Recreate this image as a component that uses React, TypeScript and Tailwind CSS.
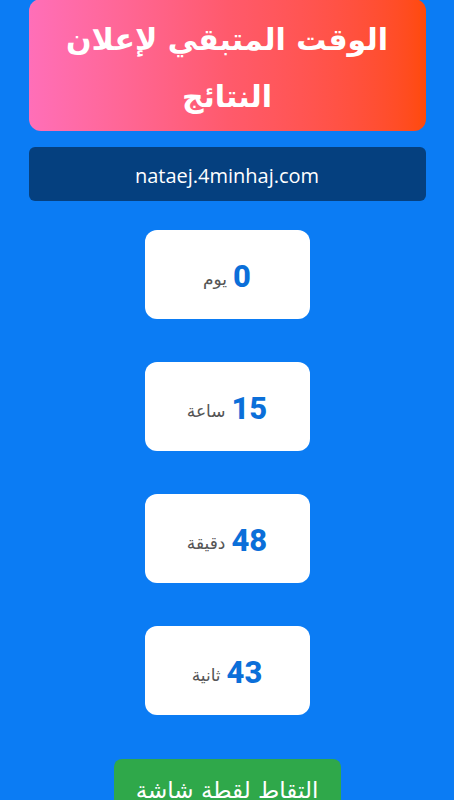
import React from "react";

const items = [
  { n: "0", l: "يوم" },
  { n: "15", l: "ساعة" },
  { n: "48", l: "دقيقة" },
  { n: "43", l: "ثانية" },
];

export default function App() {
  return (
    <div
      className="w-[454px] h-[800px] overflow-hidden bg-[#0b7cf4] flex flex-col items-center"
      style={{ fontFamily: '"Noto Sans", "DejaVu Sans", sans-serif' }}
    >
      <div className="w-[397px] h-[132px] shrink-0 mt-[-1px] rounded-[12px] bg-gradient-to-r from-[#ff6fb8] via-[#ff5a6c] to-[#ff4a08] flex items-start justify-center pt-[12px]">
        <h1
          dir="rtl"
          className="text-white text-[30px] font-bold leading-[57px] text-center w-[380px]"
          style={{ fontFamily: '"DejaVu Sans", sans-serif' }}
        >
          الوقت المتبقي لإعلان النتائج
        </h1>
      </div>
      <div className="w-[397px] h-[54px] shrink-0 mt-[16px] rounded-[6px] bg-[#05407f] flex items-center justify-center">
        <span className="text-white text-[20px] font-['Open_Sans',sans-serif] mt-[3px]">nataej.4minhaj.com</span>
      </div>
      <div className="flex flex-col shrink-0 gap-[43px] mt-[29px]">
        {items.map((it) => (
          <div
            key={it.l}
            dir="rtl"
            className="w-[165px] h-[89px] shrink-0 bg-white rounded-[12px] flex items-center justify-center gap-[6px]"
          >
            <span className="text-[#0b6fd9] text-[31px] font-extrabold font-['Roboto',sans-serif] leading-none mt-[3px]">
              {it.n}
            </span>
            <span
              className="text-[#555] text-[17px] leading-none mt-[10px]"
              style={{ fontFamily: '"DejaVu Sans", sans-serif' }}
            >
              {it.l}
            </span>
          </div>
        ))}
      </div>
      <div className="w-[227px] h-[60px] mt-[44px] shrink-0 rounded-[8px] bg-[#2fa84a] flex justify-center pt-[20px]">
        <span
          dir="rtl"
          className="text-white text-[23px] leading-none"
          style={{ fontFamily: '"DejaVu Sans", sans-serif' }}
        >
          التقاط لقطة شاشة
        </span>
      </div>
    </div>
  );
}
